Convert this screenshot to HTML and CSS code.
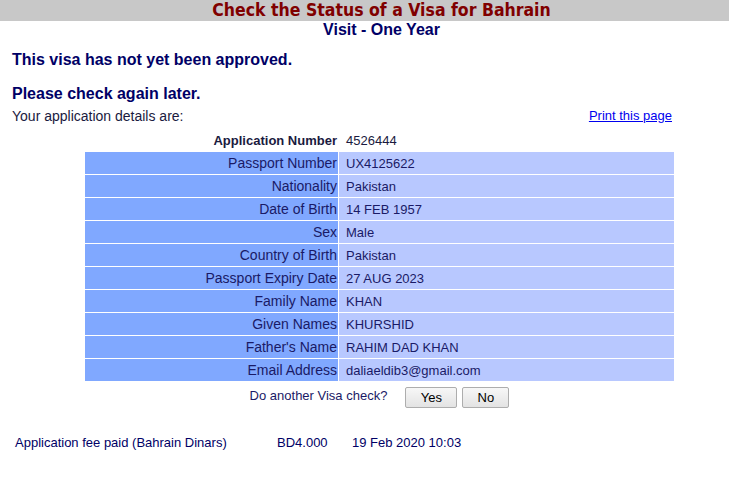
FILE: index.html
```html
<!DOCTYPE html>
<html>
<head>
<meta charset="utf-8">
<title>Check the Status of a Visa for Bahrain</title>
<link rel="stylesheet" href="styles.css">
</head>
<body>
<div class="page">
  <div class="band"><h1 class="title">Check the Status of a Visa for Bahrain</h1></div>
  <h2 class="subtitle">Visit - One Year</h2>
  <p class="status">This visa has not yet been approved.</p>
  <p class="status second">Please check again later.</p>
  <div class="intro">
    <span class="intro-text">Your application details are:</span>
    <a class="print" href="#">Print this page</a>
  </div>
  <table class="details">
    <colgroup><col class="col-lab"><col class="col-val"></colgroup>
    <tr class="appno"><td class="lab">Application Number</td><td class="val">4526444</td></tr>
    <tr class="row"><td class="lab">Passport Number</td><td class="val">UX4125622</td></tr>
    <tr class="row"><td class="lab">Nationality</td><td class="val">Pakistan</td></tr>
    <tr class="row"><td class="lab">Date of Birth</td><td class="val">14 FEB 1957</td></tr>
    <tr class="row"><td class="lab">Sex</td><td class="val">Male</td></tr>
    <tr class="row"><td class="lab">Country of Birth</td><td class="val">Pakistan</td></tr>
    <tr class="row"><td class="lab">Passport Expiry Date</td><td class="val">27 AUG 2023</td></tr>
    <tr class="row"><td class="lab">Family Name</td><td class="val">KHAN</td></tr>
    <tr class="row"><td class="lab">Given Names</td><td class="val">KHURSHID</td></tr>
    <tr class="row"><td class="lab">Father's Name</td><td class="val">RAHIM DAD KHAN</td></tr>
    <tr class="row"><td class="lab">Email Address</td><td class="val">daliaeldib3@gmail.com</td></tr>
  </table>
  <div class="again">
    <span class="again-text">Do another Visa check?</span>
    <div class="buttons">
      <button class="btn yes" type="button">Yes</button>
      <button class="btn no" type="button">No</button>
    </div>
  </div>
  <div class="fee">
    <span class="fee-label">Application fee paid (Bahrain Dinars)</span>
    <span class="fee-amount">BD4.000</span>
    <span class="fee-date">19 Feb 2020 10:03</span>
  </div>
</div>
</body>
</html>
```

FILE: styles.css
```css
html, body {
  margin: 0;
  padding: 0;
  overflow: hidden;
  background: #ffffff;
}
body {
  font-family: "Liberation Sans", Arial, sans-serif;
  color: #000066;
}
.page {
  width: 763px;
}
.band {
  background: #c8c8c8;
  height: 21px;
}
.title {
  margin: 0;
  text-align: center;
  font-family: "DejaVu Sans Condensed", "DejaVu Sans", sans-serif;
  font-weight: bold;
  font-size: 17.5px;
  line-height: 21px;
  color: #800000;
}
.subtitle {
  margin: 0;
  text-align: center;
  font-size: 16px;
  font-weight: bold;
  line-height: 18px;
  color: #000066;
}
.status {
  margin: 12px 0 0 12px;
  font-size: 16px;
  font-weight: bold;
  line-height: 18px;
  color: #000066;
}
.status.second {
  margin-top: 16px;
}
.intro {
  display: flex;
  justify-content: space-between;
  margin: 5px 0 0 12px;
  width: 660px;
  line-height: 16px;
}
.intro-text {
  font-size: 14px;
  color: #1a1a40;
}
.print {
  font-size: 13px;
  color: #0000ee;
  text-decoration: underline;
}
.details {
  margin: 4px 0 0 84px;
  width: 591px;
  table-layout: fixed;
  border-collapse: separate;
  border-spacing: 1px;
}
.col-lab { width: 253px; }
.col-val { width: 335px; }
.details td {
  height: 22px;
  padding: 0;
  vertical-align: middle;
}
.lab {
  text-align: right;
  font-size: 14px;
  padding-right: 1px !important;
  color: #1a1a66;
}
.val {
  font-size: 13px;
  padding-left: 7px !important;
  color: #1a1a66;
}
.appno .lab {
  font-size: 13px;
  font-weight: bold;
  color: #1a1a40;
}
.appno .val {
  color: #1a1a40;
}
.row .lab { background: #80a8ff; }
.row .val { background: #b8c8ff; }
.again {
  margin: 5px 0 0 84px;
  width: 591px;
  display: flex;
  justify-content: center;
  align-items: flex-start;
  gap: 18px;
}
.again-text {
  font-size: 13px;
  line-height: 15px;
  color: #1a1a66;
  margin-top: 1px;
}
.buttons {
  display: flex;
  gap: 5px;
}
.btn {
  height: 21px;
  padding: 0;
  font-family: "Liberation Sans", Arial, sans-serif;
  font-size: 13px;
  color: #000000;
  background: linear-gradient(#f7f7f7, #e3e3e3);
  border: 1px solid #adadad;
  border-radius: 2px;
}
.btn.yes { width: 52px; }
.btn.no { width: 47px; }
.fee {
  display: flex;
  margin: 27px 0 0 15px;
  font-size: 13px;
  line-height: 15px;
  color: #000066;
}
.fee-label { width: 262px; }
.fee-amount { width: 75px; }
```
